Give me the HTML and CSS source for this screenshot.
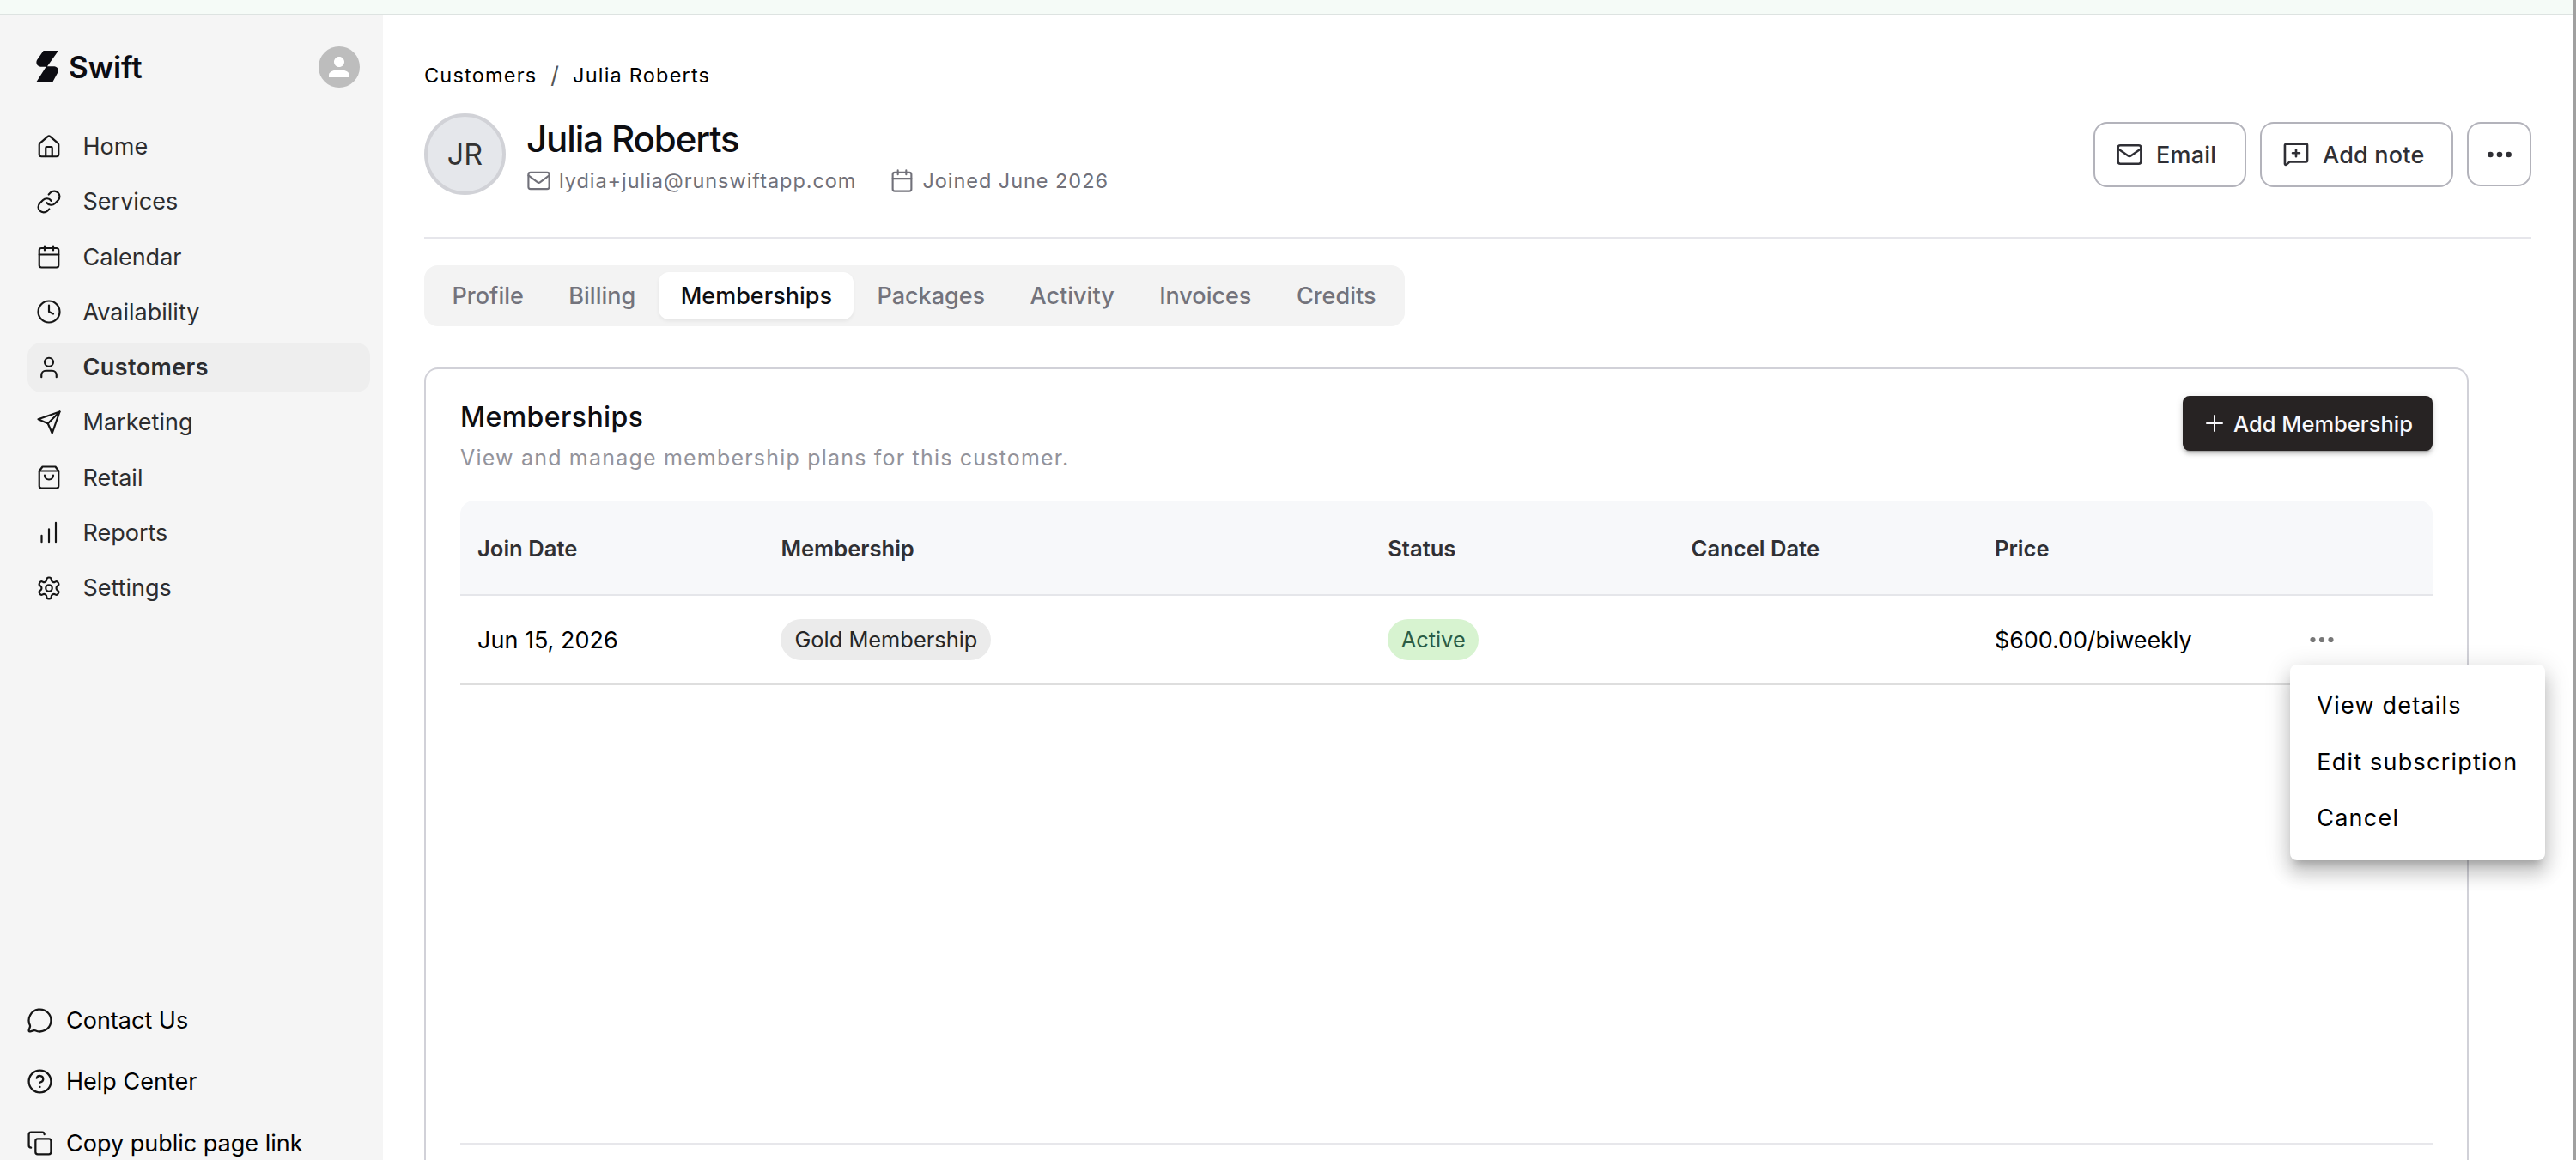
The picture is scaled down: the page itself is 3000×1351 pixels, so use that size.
FILE: index.html
```html
<!DOCTYPE html>
<html lang="en">
<head>
  <meta charset="UTF-8">
  <meta name="viewport" content="width=device-width, initial-scale=1.0">
  <title>Swift - Julia Roberts</title>
  <link rel="stylesheet" href="styles.css">
</head>
<body>
  <div class="window">
    <div class="top-strip"></div>
    <div class="app">
      <aside class="sidebar">
        <div class="brand-row">
          <div class="brand">
            <svg class="logo" viewBox="0 0 26 37"><path d="M8.6 0H26L13 18.2h7c4.4 0 7 3.2 5.4 7L19 37H0l11.6-18.2H6.4C1.4 18.8-.8 14.6 1 11z"/></svg>
            <span>Swift</span>
          </div>
          <div class="user"><svg viewBox="0 0 24 24"><path d="M12 12c2.21 0 4-1.79 4-4s-1.79-4-4-4-4 1.79-4 4 1.79 4 4 4zm0 2c-2.67 0-8 1.34-8 4v2h16v-2c0-2.66-5.33-4-8-4z"/></svg></div>
        </div>

        <nav class="nav">
          <a class="nav-item"><svg class="icon" viewBox="0 0 24 24"><path d="M15 21v-8a1 1 0 0 0-1-1h-4a1 1 0 0 0-1 1v8"/><path d="M3 10a2 2 0 0 1 .709-1.528l7-5.999a2 2 0 0 1 2.582 0l7 5.999A2 2 0 0 1 21 10v9a2 2 0 0 1-2 2H5a2 2 0 0 1-2-2z"/></svg>Home</a>
          <a class="nav-item"><svg class="icon" viewBox="0 0 24 24"><path d="M10 13a5 5 0 0 0 7.54.54l3-3a5 5 0 0 0-7.07-7.07l-1.72 1.71"/><path d="M14 11a5 5 0 0 0-7.54-.54l-3 3a5 5 0 0 0 7.07 7.07l1.71-1.71"/></svg>Services</a>
          <a class="nav-item"><svg class="icon" viewBox="0 0 24 24"><rect x="3" y="4" width="18" height="18" rx="2"/><path d="M16 2v4M8 2v4M3 10h18"/></svg>Calendar</a>
          <a class="nav-item"><svg class="icon" viewBox="0 0 24 24"><circle cx="12" cy="12" r="10"/><path d="M12 6v6l4 2"/></svg>Availability</a>
          <a class="nav-item active"><svg class="icon" viewBox="0 0 24 24"><path d="M19 21v-2a4 4 0 0 0-4-4H9a4 4 0 0 0-4 4v2"/><circle cx="12" cy="7" r="4"/></svg>Customers</a>
          <a class="nav-item"><svg class="icon" viewBox="0 0 24 24"><path d="m22 2-7 20-4-9-9-4Z"/><path d="M22 2 11 13"/></svg>Marketing</a>
          <a class="nav-item"><svg class="icon" viewBox="0 0 24 24"><path d="M6 2 3 6v14a2 2 0 0 0 2 2h14a2 2 0 0 0 2-2V6l-3-4Z"/><path d="M3 6h18"/><path d="M16 10a4 4 0 0 1-8 0"/></svg>Retail</a>
          <a class="nav-item"><svg class="icon" viewBox="0 0 24 24"><path d="M12 21V9M18.4 21V3M5.2 21v-6"/></svg>Reports</a>
          <a class="nav-item"><svg class="icon" viewBox="0 0 24 24"><path d="M12.22 2h-.44a2 2 0 0 0-2 2v.18a2 2 0 0 1-1 1.73l-.43.25a2 2 0 0 1-2 0l-.15-.08a2 2 0 0 0-2.73.73l-.22.38a2 2 0 0 0 .73 2.73l.15.1a2 2 0 0 1 1 1.72v.51a2 2 0 0 1-1 1.74l-.15.09a2 2 0 0 0-.73 2.73l.22.38a2 2 0 0 0 2.73.73l.15-.08a2 2 0 0 1 2 0l.43.25a2 2 0 0 1 1 1.73V20a2 2 0 0 0 2 2h.44a2 2 0 0 0 2-2v-.18a2 2 0 0 1 1-1.73l.43-.25a2 2 0 0 1 2 0l.15.08a2 2 0 0 0 2.73-.73l.22-.39a2 2 0 0 0-.73-2.73l-.15-.08a2 2 0 0 1-1-1.74v-.5a2 2 0 0 1 1-1.74l.15-.09a2 2 0 0 0 .73-2.73l-.22-.38a2 2 0 0 0-2.73-.73l-.15.08a2 2 0 0 1-2 0l-.43-.25a2 2 0 0 1-1-1.73V4a2 2 0 0 0-2-2z"/><circle cx="12" cy="12" r="3"/></svg>Settings</a>
        </nav>

        <div class="help">
          <a class="help-item"><svg class="icon" viewBox="0 0 24 24"><path d="M2.99 16.34a2 2 0 0 1 .1 1.17l-1.07 3.29a1 1 0 0 0 1.24 1.17l3.41-1a2 2 0 0 1 1.1.09 10 10 0 1 0-4.78-4.72"/></svg>Contact Us</a>
          <a class="help-item"><svg class="icon" viewBox="0 0 24 24"><circle cx="12" cy="12" r="10"/><path d="M9.09 9a3 3 0 0 1 5.83 1c0 2-3 3-3 3M12 17h.01"/></svg>Help Center</a>
          <a class="help-item"><svg class="icon" viewBox="0 0 24 24"><rect x="8" y="8" width="14" height="14" rx="2"/><path d="M4 16c-1.1 0-2-.9-2-2V4c0-1.1.9-2 2-2h10c1.1 0 2 .9 2 2"/></svg>Copy public page link</a>
        </div>
      </aside>

      <main class="main">
        <div class="breadcrumb"><span>Customers</span><span class="slash">/</span><span>Julia Roberts</span></div>

        <header class="customer">
          <div class="initials">JR</div>
          <div class="customer-info">
            <h1>Julia Roberts</h1>
            <div class="meta">
              <svg class="icon" viewBox="0 0 24 24"><rect x="2" y="4" width="20" height="16" rx="2"/><path d="m22 7-8.6 6.4a2.3 2.3 0 0 1-2.8 0L2 7"/></svg>
              <span class="meta-email">lydia+julia@runswiftapp.com</span>
              <svg class="icon" viewBox="0 0 24 24"><rect x="3" y="4" width="18" height="18" rx="2"/><path d="M16 2v4M8 2v4M3 10h18"/></svg>
              <span>Joined June 2026</span>
            </div>
          </div>
          <div class="actions">
            <button class="btn btn-email"><svg class="icon" viewBox="0 0 24 24"><rect x="2" y="4" width="20" height="16" rx="2"/><path d="m22 7-8.6 6a2.3 2.3 0 0 1-2.8 0L2 7"/></svg>Email</button>
            <button class="btn btn-note"><svg class="icon" viewBox="0 0 24 24"><path d="M2.8 19.6V4.3a1 1 0 0 1 1-1h16.4a1 1 0 0 1 1 1v12.6a1 1 0 0 1-1 1H6.8l-2.6 2.3c-.6.5-1.4.2-1.4-.6z"/><path d="M12 8v5.6M9.2 10.8h5.6"/></svg>Add note</button>
            <button class="btn btn-more"><svg class="dots" viewBox="0 0 30 8"><circle cx="4.4" cy="4" r="3.3"/><circle cx="15" cy="4" r="3.3"/><circle cx="25.6" cy="4" r="3.3"/></svg></button>
          </div>
        </header>

        <div class="tabs">
          <a class="tab">Profile</a>
          <a class="tab">Billing</a>
          <a class="tab active">Memberships</a>
          <a class="tab">Packages</a>
          <a class="tab">Activity</a>
          <a class="tab">Invoices</a>
          <a class="tab">Credits</a>
        </div>

        <section class="card">
          <div class="card-head">
            <div>
              <h2>Memberships</h2>
              <p>View and manage membership plans for this customer.</p>
            </div>
            <button class="add-btn"><svg viewBox="0 0 20 20"><path d="M10 1v18M1 10h18"/></svg>Add Membership</button>
          </div>

          <div class="table">
            <div class="row row-head">
              <div class="cell">Join Date</div>
              <div class="cell">Membership</div>
              <div class="cell">Status</div>
              <div class="cell">Cancel Date</div>
              <div class="cell">Price</div>
              <div class="cell"></div>
            </div>
            <div class="row">
              <div class="cell">Jun 15, 2026</div>
              <div class="cell"><span class="badge">Gold Membership</span></div>
              <div class="cell"><span class="badge badge-active">Active</span></div>
              <div class="cell"></div>
              <div class="cell cell-price">$600.00/biweekly</div>
              <div class="cell cell-menu">
                <svg class="dots" viewBox="0 0 30 8"><circle cx="4.5" cy="4" r="3.1"/><circle cx="15" cy="4" r="3.1"/><circle cx="25.5" cy="4" r="3.1"/></svg>
                <div class="menu">
                  <a>View details</a>
                  <a>Edit subscription</a>
                  <a>Cancel</a>
                </div>
              </div>
            </div>
            <div class="table-space"></div>
          </div>
        </section>
      </main>
    </div>
  </div>
  <div class="window-edge"></div>
</body>
</html>
```
FILE: styles.css
```css
* {
  margin: 0;
  padding: 0;
  box-sizing: border-box;
}

body {
  display: flex;
  width: 3000px;
  height: 1351px;
  overflow: hidden;
  background: #fff;
  color: #000;
  font-family: Inter, "Liberation Sans", sans-serif;
  font-size: 27px;
}

button {
  font-family: inherit;
}

.window {
  flex: 1;
  display: flex;
  flex-direction: column;
}

.window-edge {
  width: 4px;
  background: #a0a0a0;
  border-left: 1px solid #777;
}

.top-strip {
  height: 18px;
  background: #f5fbf7;
  border-bottom: 2px solid #dde3e1;
}

.app {
  flex: 1;
  display: flex;
  min-height: 0;
}

.icon {
  flex: none;
  fill: none;
  stroke: currentColor;
  stroke-width: 1.75;
  stroke-linecap: round;
  stroke-linejoin: round;
}

/* sidebar */
.sidebar {
  width: 446px;
  background: #f5f5f5;
  overflow: hidden;
}

.brand-row {
  display: flex;
  justify-content: space-between;
  align-items: center;
  height: 48px;
  margin: 35.5px 27px 40px 42px;
}

.brand {
  display: flex;
  align-items: center;
  gap: 12px;
  color: #0c0c12;
  font-size: 35px;
  font-weight: 600;
  letter-spacing: -0.1px;
}

.logo {
  width: 26px;
  height: 37px;
  fill: #0c0c12;
}

.user {
  display: flex;
  align-items: center;
  justify-content: center;
  width: 48px;
  height: 48px;
  border-radius: 50%;
  background: #bdbdbd;
}

.user svg {
  width: 36px;
  height: 36px;
  fill: #fff;
}

.nav {
  display: flex;
  flex-direction: column;
  gap: 6.25px;
  margin: 0 15px 0 32px;
}

.nav-item {
  display: flex;
  align-items: center;
  gap: 25px;
  height: 58px;
  padding-left: 9.5px;
  border-radius: 16px;
  color: #2d2d2f;
}

.nav-item .icon {
  width: 30px;
  height: 30px;
  color: #151515;
}

.nav-item.active {
  background: #eee;
  font-weight: 600;
  letter-spacing: 0.4px;
}

.help {
  margin: 439px 0 0 31px;
}

.help-item {
  display: flex;
  align-items: center;
  gap: 15px;
  height: 71.5px;
}

.help-item .icon {
  width: 31px;
  height: 31px;
  color: #151515;
}

/* main column */
.main {
  flex: 1;
  display: flex;
  flex-direction: column;
  padding: 55px 48px 0;
}

.breadcrumb {
  display: flex;
  height: 30px;
  margin-bottom: 29px;
  font-size: 23.5px;
  line-height: 30px;
  letter-spacing: 1.2px;
}

.slash {
  margin: 0 16px;
  color: #555;
  font-size: 27px;
  letter-spacing: 0;
}

.customer {
  display: flex;
  height: 146px;
  border-bottom: 2px solid #e6e6eb;
}

.initials {
  display: flex;
  align-items: center;
  justify-content: center;
  width: 95px;
  height: 95px;
  border: 4px solid #d1d2d7;
  border-radius: 50%;
  background: #e5e7eb;
  color: #333;
  font-size: 34px;
}

.customer-info {
  flex: 1;
  padding: 5px 0 0 24px;
}

h1 {
  color: #0e0e12;
  font-size: 42px;
  font-weight: 500;
  line-height: 50px;
  letter-spacing: -1.1px;
}

.meta {
  display: flex;
  align-items: center;
  gap: 9px;
  height: 30px;
  margin-top: 8px;
  color: #71717a;
  font-size: 23.5px;
  letter-spacing: 0.95px;
}

.meta .icon {
  width: 29px;
  height: 29px;
}

.meta-email {
  margin-right: 30px;
}

.actions {
  display: flex;
  gap: 16px;
  margin-top: 10px;
}

.btn {
  display: flex;
  align-items: center;
  gap: 15px;
  height: 76px;
  border: 2px solid #b3b3bb;
  border-radius: 16px;
  background: #fff;
  color: #2f2f35;
  font-size: 27px;
  font-weight: 500;
  letter-spacing: 0.2px;
}

.btn .icon {
  stroke-width: 1.85;
}

.btn-email {
  width: 178px;
  padding-left: 24px;
}

.btn-email .icon {
  width: 32px;
  height: 32px;
}

.btn-note {
  width: 225px;
  gap: 14px;
  padding-left: 23px;
}

.btn-note .icon {
  width: 34px;
  height: 34px;
}

.btn-more {
  justify-content: center;
  width: 75px;
  height: 75px;
}

.dots {
  width: 30px;
  height: 8px;
  fill: currentColor;
}

.tabs {
  display: flex;
  justify-content: space-between;
  width: 1142px;
  height: 71px;
  margin-top: 31px;
  padding: 8px 8px 8px 7px;
  border-radius: 16px;
  background: #f3f3f3;
}

.tab {
  padding: 0 25.5px;
  border-radius: 12px;
  color: #73737c;
  font-weight: 500;
  line-height: 55px;
}

.tab.active {
  background: #fff;
  color: #0e0e12;
  box-shadow: 0 2px 4px rgba(0, 0, 0, 0.06);
}

/* memberships card */
.card {
  flex: 1;
  width: 2381px;
  margin-top: 48px;
  padding: 31px 40px 0;
  border: 2px solid #d1d1d8;
  border-bottom: 0;
  border-radius: 16px 16px 0 0;
}

.card-head {
  display: flex;
  justify-content: space-between;
  height: 122px;
}

h2 {
  margin-top: 3px;
  color: #0e0e12;
  font-size: 32px;
  font-weight: 500;
  line-height: 44px;
  letter-spacing: 0.4px;
}

.card-head p {
  margin-top: 7px;
  color: #93939b;
  font-size: 25px;
  line-height: 36px;
  letter-spacing: 1.2px;
}

.add-btn {
  display: flex;
  align-items: center;
  gap: 12px;
  width: 291px;
  height: 64px;
  padding-left: 27px;
  border: 0;
  border-radius: 8px;
  background: #272323;
  color: #f8f8fc;
  font-size: 25.5px;
  font-weight: 500;
  box-shadow: 0 6px 2px -4px rgba(0, 0, 0, 0.2), 0 4px 4px rgba(0, 0, 0, 0.14), 0 2px 10px rgba(0, 0, 0, 0.12);
}

.add-btn svg {
  width: 20px;
  height: 20px;
  fill: none;
  stroke: currentColor;
  stroke-width: 2;
  stroke-linecap: round;
}

.row {
  display: grid;
  grid-template-columns: 2fr 4fr 2fr 2fr 2fr 1fr;
  height: 104px;
  border-bottom: 2px solid #dedede;
}

.row-head {
  height: 111px;
  padding-top: 1px;
  border-bottom-color: #e5e6ea;
  border-radius: 16px 16px 0 0;
  background: #f7f8fa;
  color: #303034;
  font-size: 25.6px;
  font-weight: 600;
}

.cell {
  display: flex;
  align-items: center;
  padding-left: 20px;
}

.cell-price {
  letter-spacing: -0.1px;
}

.badge {
  height: 48px;
  padding: 0 16px;
  border-radius: 24px;
  background: #ebebeb;
  color: #262626;
  font-size: 25.4px;
  line-height: 48px;
}

.badge-active {
  padding: 0 15.5px;
  background: #d7f3d0;
  color: #2c5c45;
}

.cell-menu {
  position: relative;
  padding-left: 33px;
  color: #777;
}

.menu {
  position: absolute;
  top: 80px;
  left: 11px;
  width: 297px;
  height: 228px;
  padding: 15px 0 0 31px;
  border-radius: 8px;
  background: #fff;
  color: #000;
  letter-spacing: 1.22px;
  box-shadow: 0 10px 10px -6px rgba(0, 0, 0, 0.2), 0 16px 20px 2px rgba(0, 0, 0, 0.14), 0 6px 28px 4px rgba(0, 0, 0, 0.12);
}

.menu a {
  display: block;
  line-height: 65.5px;
}

.table-space {
  height: 535px;
  border-bottom: 2px solid #e7e7eb;
}
```
